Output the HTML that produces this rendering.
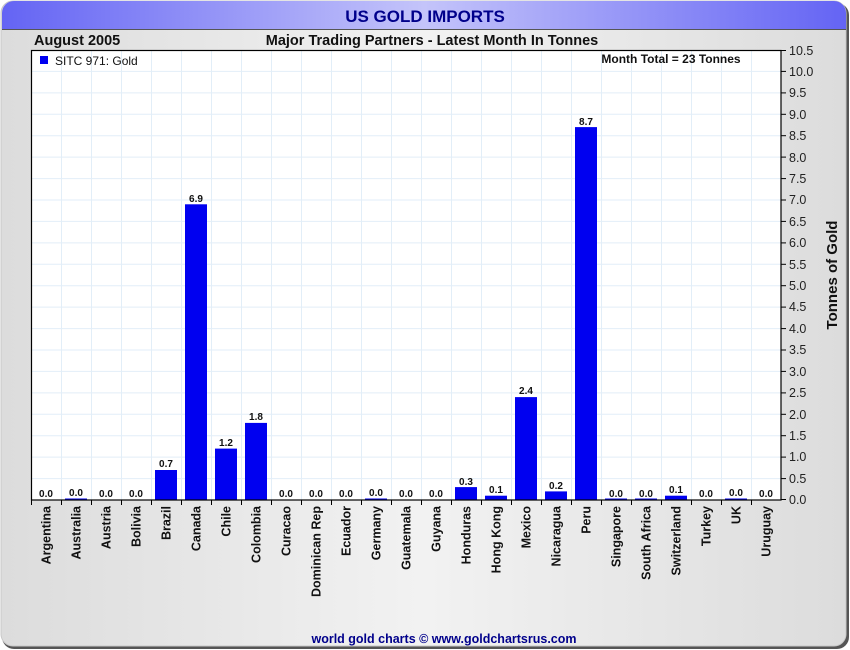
<!DOCTYPE html>
<html><head><meta charset="utf-8"><style>
html,body{margin:0;padding:0;background:#fff;}
svg{display:block;font-family:"Liberation Sans",Arial,sans-serif;}
</style></head><body>
<svg width="850" height="650" viewBox="0 0 850 650" xmlns="http://www.w3.org/2000/svg">
<defs>
<linearGradient id="bg" x1="0" x2="1" y1="0" y2="0"><stop offset="0" stop-color="#dcdcdc"/><stop offset="0.5" stop-color="#f2f2f2"/><stop offset="1" stop-color="#dcdcdc"/></linearGradient>
<linearGradient id="tb" x1="0" x2="1" y1="0" y2="0"><stop offset="0" stop-color="#6464f4"/><stop offset="0.5" stop-color="#c4c4fa"/><stop offset="1" stop-color="#6464f4"/></linearGradient>
</defs>
<rect x="0" y="0" width="850" height="650" fill="#fff"/>
<rect x="2" y="3" width="847" height="646" rx="12" fill="#555"/>
<rect x="1" y="1" width="845" height="645" rx="12" fill="url(#bg)" stroke="#c8c8c8"/>
<path d="M2 29 V13 A12 12 0 0 1 14 1 H834 A12 12 0 0 1 846 13 V29 Z" fill="url(#tb)"/>
<line x1="2" y1="29.5" x2="846" y2="29.5" stroke="#555" stroke-width="1"/>
<text x="425" y="22" text-anchor="middle" font-weight="bold" font-size="17" fill="#00008b">US GOLD IMPORTS</text>
<text x="34" y="45" font-weight="bold" font-size="14.5" fill="#111">August 2005</text>
<text x="432" y="45" text-anchor="middle" font-weight="bold" font-size="14.5" fill="#111">Major Trading Partners - Latest Month In Tonnes</text>
<rect x="31" y="50" width="750" height="450" fill="#fff"/>
<g stroke="#e2eef8" stroke-width="1">
<line x1="61.5" y1="50" x2="61.5" y2="500"/><line x1="91.5" y1="50" x2="91.5" y2="500"/><line x1="121.5" y1="50" x2="121.5" y2="500"/><line x1="151.5" y1="50" x2="151.5" y2="500"/><line x1="181.5" y1="50" x2="181.5" y2="500"/><line x1="211.5" y1="50" x2="211.5" y2="500"/><line x1="241.5" y1="50" x2="241.5" y2="500"/><line x1="271.5" y1="50" x2="271.5" y2="500"/><line x1="301.5" y1="50" x2="301.5" y2="500"/><line x1="331.5" y1="50" x2="331.5" y2="500"/><line x1="361.5" y1="50" x2="361.5" y2="500"/><line x1="391.5" y1="50" x2="391.5" y2="500"/><line x1="421.5" y1="50" x2="421.5" y2="500"/><line x1="451.5" y1="50" x2="451.5" y2="500"/><line x1="481.5" y1="50" x2="481.5" y2="500"/><line x1="511.5" y1="50" x2="511.5" y2="500"/><line x1="541.5" y1="50" x2="541.5" y2="500"/><line x1="571.5" y1="50" x2="571.5" y2="500"/><line x1="601.5" y1="50" x2="601.5" y2="500"/><line x1="631.5" y1="50" x2="631.5" y2="500"/><line x1="661.5" y1="50" x2="661.5" y2="500"/><line x1="691.5" y1="50" x2="691.5" y2="500"/><line x1="721.5" y1="50" x2="721.5" y2="500"/><line x1="751.5" y1="50" x2="751.5" y2="500"/>
<line x1="31" y1="71.4" x2="781" y2="71.4"/><line x1="31" y1="92.9" x2="781" y2="92.9"/><line x1="31" y1="114.3" x2="781" y2="114.3"/><line x1="31" y1="135.7" x2="781" y2="135.7"/><line x1="31" y1="157.1" x2="781" y2="157.1"/><line x1="31" y1="178.6" x2="781" y2="178.6"/><line x1="31" y1="200" x2="781" y2="200"/><line x1="31" y1="221.4" x2="781" y2="221.4"/><line x1="31" y1="242.9" x2="781" y2="242.9"/><line x1="31" y1="264.3" x2="781" y2="264.3"/><line x1="31" y1="285.7" x2="781" y2="285.7"/><line x1="31" y1="307.1" x2="781" y2="307.1"/><line x1="31" y1="328.6" x2="781" y2="328.6"/><line x1="31" y1="350" x2="781" y2="350"/><line x1="31" y1="371.4" x2="781" y2="371.4"/><line x1="31" y1="392.9" x2="781" y2="392.9"/><line x1="31" y1="414.3" x2="781" y2="414.3"/><line x1="31" y1="435.7" x2="781" y2="435.7"/><line x1="31" y1="457.1" x2="781" y2="457.1"/><line x1="31" y1="478.6" x2="781" y2="478.6"/>
</g>
<g fill="#0000f0">
<rect x="65" y="498.5" width="22" height="1.5"/>
<rect x="155" y="470" width="22" height="30"/>
<rect x="185" y="204.3" width="22" height="295.7"/>
<rect x="215" y="448.6" width="22" height="51.4"/>
<rect x="245" y="422.9" width="22" height="77.1"/>
<rect x="365" y="498.5" width="22" height="1.5"/>
<rect x="455" y="487.1" width="22" height="12.9"/>
<rect x="485" y="495.7" width="22" height="4.3"/>
<rect x="515" y="397.1" width="22" height="102.9"/>
<rect x="545" y="491.4" width="22" height="8.6"/>
<rect x="575" y="127.1" width="22" height="372.9"/>
<rect x="605" y="498.5" width="22" height="1.5"/>
<rect x="635" y="498.5" width="22" height="1.5"/>
<rect x="665" y="495.7" width="22" height="4.3"/>
<rect x="725" y="498.5" width="22" height="1.5"/>
</g>
<rect x="31.5" y="50.5" width="749.5" height="449.5" fill="none" stroke="#000" stroke-width="1.2"/>
<rect x="40" y="56" width="8" height="8" fill="#0000f0"/>
<text x="55" y="65" font-size="12" fill="#111">SITC 971: Gold</text>
<text x="671" y="63" text-anchor="middle" font-size="12" font-weight="bold" fill="#111">Month Total = 23 Tonnes</text>
<g font-size="10" font-weight="bold" fill="#111" text-anchor="middle">
<text x="46" y="497">0.0</text><text x="76" y="496">0.0</text><text x="106" y="497">0.0</text><text x="136" y="497">0.0</text><text x="166" y="467">0.7</text><text x="196" y="202">6.9</text><text x="226" y="446">1.2</text><text x="256" y="420">1.8</text><text x="286" y="497">0.0</text><text x="316" y="497">0.0</text><text x="346" y="497">0.0</text><text x="376" y="496">0.0</text><text x="406" y="497">0.0</text><text x="436" y="497">0.0</text><text x="466" y="485">0.3</text><text x="496" y="493">0.1</text><text x="526" y="394">2.4</text><text x="556" y="489">0.2</text><text x="586" y="125">8.7</text><text x="616" y="497">0.0</text><text x="646" y="497">0.0</text><text x="676" y="493">0.1</text><text x="706" y="497">0.0</text><text x="736" y="496">0.0</text><text x="766" y="497">0.0</text>
</g>
<g stroke="#000" stroke-width="1">
<line x1="31.5" y1="500" x2="31.5" y2="505"/><line x1="61.5" y1="500" x2="61.5" y2="505"/><line x1="91.5" y1="500" x2="91.5" y2="505"/><line x1="121.5" y1="500" x2="121.5" y2="505"/><line x1="151.5" y1="500" x2="151.5" y2="505"/><line x1="181.5" y1="500" x2="181.5" y2="505"/><line x1="211.5" y1="500" x2="211.5" y2="505"/><line x1="241.5" y1="500" x2="241.5" y2="505"/><line x1="271.5" y1="500" x2="271.5" y2="505"/><line x1="301.5" y1="500" x2="301.5" y2="505"/><line x1="331.5" y1="500" x2="331.5" y2="505"/><line x1="361.5" y1="500" x2="361.5" y2="505"/><line x1="391.5" y1="500" x2="391.5" y2="505"/><line x1="421.5" y1="500" x2="421.5" y2="505"/><line x1="451.5" y1="500" x2="451.5" y2="505"/><line x1="481.5" y1="500" x2="481.5" y2="505"/><line x1="511.5" y1="500" x2="511.5" y2="505"/><line x1="541.5" y1="500" x2="541.5" y2="505"/><line x1="571.5" y1="500" x2="571.5" y2="505"/><line x1="601.5" y1="500" x2="601.5" y2="505"/><line x1="631.5" y1="500" x2="631.5" y2="505"/><line x1="661.5" y1="500" x2="661.5" y2="505"/><line x1="691.5" y1="500" x2="691.5" y2="505"/><line x1="721.5" y1="500" x2="721.5" y2="505"/><line x1="751.5" y1="500" x2="751.5" y2="505"/>
</g>
<g font-size="12.5" font-weight="bold" fill="#111" text-anchor="end">
<text transform="translate(50.5,506) rotate(-90)">Argentina</text>
<text transform="translate(80.5,506) rotate(-90)">Australia</text>
<text transform="translate(110.5,506) rotate(-90)">Austria</text>
<text transform="translate(140.5,506) rotate(-90)">Bolivia</text>
<text transform="translate(170.5,506) rotate(-90)">Brazil</text>
<text transform="translate(200.5,506) rotate(-90)">Canada</text>
<text transform="translate(230.5,506) rotate(-90)">Chile</text>
<text transform="translate(260.5,506) rotate(-90)">Colombia</text>
<text transform="translate(290.5,506) rotate(-90)">Curacao</text>
<text transform="translate(320.5,506) rotate(-90)">Dominican Rep</text>
<text transform="translate(350.5,506) rotate(-90)">Ecuador</text>
<text transform="translate(380.5,506) rotate(-90)">Germany</text>
<text transform="translate(410.5,506) rotate(-90)">Guatemala</text>
<text transform="translate(440.5,506) rotate(-90)">Guyana</text>
<text transform="translate(470.5,506) rotate(-90)">Honduras</text>
<text transform="translate(500.5,506) rotate(-90)">Hong Kong</text>
<text transform="translate(530.5,506) rotate(-90)">Mexico</text>
<text transform="translate(560.5,506) rotate(-90)">Nicaragua</text>
<text transform="translate(590.5,506) rotate(-90)">Peru</text>
<text transform="translate(620.5,506) rotate(-90)">Singapore</text>
<text transform="translate(650.5,506) rotate(-90)">South Africa</text>
<text transform="translate(680.5,506) rotate(-90)">Switzerland</text>
<text transform="translate(710.5,506) rotate(-90)">Turkey</text>
<text transform="translate(740.5,506) rotate(-90)">UK</text>
<text transform="translate(770.5,506) rotate(-90)">Uruguay</text>
</g>
<g stroke="#000" stroke-width="1">
<line x1="781" y1="50.5" x2="786" y2="50.5"/><line x1="781" y1="71.4" x2="786" y2="71.4"/><line x1="781" y1="92.9" x2="786" y2="92.9"/><line x1="781" y1="114.3" x2="786" y2="114.3"/><line x1="781" y1="135.7" x2="786" y2="135.7"/><line x1="781" y1="157.1" x2="786" y2="157.1"/><line x1="781" y1="178.6" x2="786" y2="178.6"/><line x1="781" y1="200" x2="786" y2="200"/><line x1="781" y1="221.4" x2="786" y2="221.4"/><line x1="781" y1="242.9" x2="786" y2="242.9"/><line x1="781" y1="264.3" x2="786" y2="264.3"/><line x1="781" y1="285.7" x2="786" y2="285.7"/><line x1="781" y1="307.1" x2="786" y2="307.1"/><line x1="781" y1="328.6" x2="786" y2="328.6"/><line x1="781" y1="350" x2="786" y2="350"/><line x1="781" y1="371.4" x2="786" y2="371.4"/><line x1="781" y1="392.9" x2="786" y2="392.9"/><line x1="781" y1="414.3" x2="786" y2="414.3"/><line x1="781" y1="435.7" x2="786" y2="435.7"/><line x1="781" y1="457.1" x2="786" y2="457.1"/><line x1="781" y1="478.6" x2="786" y2="478.6"/><line x1="781" y1="499.5" x2="786" y2="499.5"/>
</g>
<g font-size="12.5" fill="#222">
<text x="789" y="55">10.5</text><text x="789" y="76">10.0</text><text x="789" y="97">9.5</text><text x="789" y="119">9.0</text><text x="789" y="140">8.5</text><text x="789" y="162">8.0</text><text x="789" y="183">7.5</text><text x="789" y="204">7.0</text><text x="789" y="226">6.5</text><text x="789" y="247">6.0</text><text x="789" y="269">5.5</text><text x="789" y="290">5.0</text><text x="789" y="311">4.5</text><text x="789" y="333">4.0</text><text x="789" y="354">3.5</text><text x="789" y="376">3.0</text><text x="789" y="397">2.5</text><text x="789" y="419">2.0</text><text x="789" y="440">1.5</text><text x="789" y="461">1.0</text><text x="789" y="483">0.5</text><text x="789" y="504">0.0</text>
</g>
<text transform="translate(837,275) rotate(-90)" text-anchor="middle" font-size="15" font-weight="bold" fill="#111">Tonnes of Gold</text>
<text x="444" y="643" text-anchor="middle" font-size="12.5" font-weight="bold" fill="#00008b">world gold charts © www.goldchartsrus.com</text>
</svg>
</body></html>
